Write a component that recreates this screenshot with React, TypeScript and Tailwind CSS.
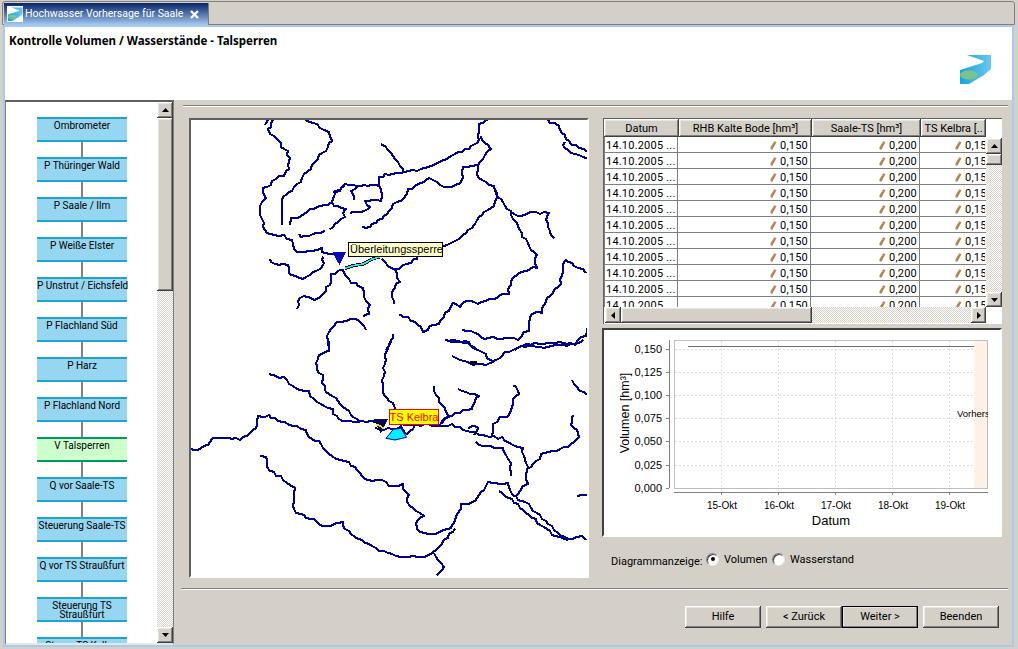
const bevel = "bg-[#d4d0c8] shadow-[inset_-1px_-1px_#404040,inset_1px_1px_#fff,inset_-2px_-2px_#808080,inset_2px_2px_#e8e6e0]";
const track = "bg-[repeating-conic-gradient(#d4d0c8_0_25%,#fff_0_50%)] bg-[length:2px_2px]";

const steps: { label: string; sel?: boolean; wrap?: boolean }[] = [
  { label: "Ombrometer" }, { label: "P Thüringer Wald" }, { label: "P Saale / Ilm" }, { label: "P Weiße Elster" },
  { label: "P Unstrut / Eichsfeld" }, { label: "P Flachland Süd" }, { label: "P Harz" }, { label: "P Flachland Nord" },
  { label: "V Talsperren", sel: true }, { label: "Q vor Saale-TS" }, { label: "Steuerung Saale-TS" }, { label: "Q vor TS Straußfurt" },
  { label: "Steuerung TS Straußfurt", wrap: true }, { label: "Steuer TS Kelbra" },
];

const topRivers = [
  "262,28 255,50 247,60 275,90 285,100 305,125 313,145 310,175 295,195 270,205 255,222 232,235 230,250 240,262 228,275 222,300 232,340 232,352 255,375 295,378 318,390 335,428 385,425 408,417 420,432 445,434 470,438",
  "243,45 248,30",
  "355,28 395,45 430,68 438,90 420,120 395,145 375,175 345,215 320,240 295,258 287,290 290,345",
  "318,345 320,328 350,320 375,300 440,280 478,298 478,318 458,335 435,358",
  "340,375 360,382 395,372 420,362",
  "445,250 480,225 585,228 585,205 600,195 660,188 720,178 770,155 820,130 880,100 885,45 910,28",
  "660,188 620,125 588,103",
  "885,80 915,115 890,145 875,165 878,205 925,230 935,260 925,285 880,320 860,350 820,385 775,410",
  "440,280 455,250 480,228",
  "510,270 500,245 520,228",
  "495,312 540,305 558,288 540,275 590,272 592,240 585,228",
  "530,355 545,358 600,320 625,285 660,265 670,240 730,208 790,235 830,215 835,175 875,165",
  "925,230 945,270 975,305 1020,390 1052,435 1055,470 1020,480 985,500 970,550 925,565 880,578 855,570 825,588 800,578 790,600 760,640 715,662 680,630 643,612",
  "975,305 1010,320 1040,308 1088,310 1085,340 1108,385",
  "1085,28 1120,50 1150,95 1205,125",
  "1135,95 1135,115 1170,135 1205,145",
  "253,447 258,460 305,465 318,498 355,510 385,490 415,470 415,440",
  "340,597 340,575 355,560 400,570 440,515 440,495 470,478",
  "470,478 490,510 530,535 550,585 550,610 535,622",
  "590,450 630,480 643,515 622,540 628,582",
  "630,480 665,465 690,450 700,445",
  "1205,485 1170,465 1140,450 1125,520 1080,575 1070,605 1035,615 1030,660 1000,685 900,685 870,665 832,660",
  "780,692 840,695 875,720",
  "1205,650 1200,675 1170,700 1065,700 1000,710 990,720",
  "545,657 510,625 470,632 435,655 425,690 432,720",
  "605,720 625,672",
];
const bottomRivers = [
  "425,0 432,30 400,45 392,80 410,105 420,160 450,175 490,215 525,245",
  "615,5 600,60 590,155 620,190 630,210 650,260",
  "250,105 295,115 345,153 370,155 385,180 440,210 460,238 530,245 570,245",
  "570,268 610,268 645,265 670,285 690,255",
  "650,255 730,255 800,255 870,280 950,295 1010,325 1025,380 1025,430 990,470 1030,495 1080,545 1150,600 1190,590 1205,600",
  "745,140 760,175 790,225 765,255",
  "818,150 880,165 860,205 800,225 770,250",
  "870,285 880,260 860,255 850,265",
  "873,310 950,325 975,370 978,408",
  "925,285 925,255 945,235 975,225 985,180 1005,160 985,135",
  "1030,390 1070,345 1160,315 1185,290 1160,255 1165,225",
  "1158,122 1175,145 1205,165",
  "1178,470 1205,465",
  "15,330 40,332 85,298 175,295 215,265 220,232 250,228 300,250 360,270 370,295 400,305 440,350 490,370 550,422 590,422 625,442 650,435 670,465 665,490 715,525 695,540 695,570 740,585 800,565 815,530 830,495 860,490 910,430 965,430 990,470",
  "225,350 240,350 245,385 285,410 325,445 325,510 345,525 385,540 415,560 470,548 490,575 560,620 620,645 720,655 745,640 810,565",
  "745,640 775,680 755,705",
  "940,455 980,480 1050,540 1110,590 1150,600",
  "785,3 850,10 900,45 925,65 960,40 1010,20 1100,20 1170,15 1195,0",
  "800,50 850,70 890,75 925,65",
];

// Gives a traced river the irregular, stair-stepped line of the original raster map.
function wiggle(points: string, seed: number): string {
  const pts = points.split(" ").map((p) => p.split(",").map(Number));
  const out: string[] = [];
  let k = seed * 7 + 1;
  for (let i = 0; i < pts.length - 1; i++) {
    const [x0, y0] = pts[i];
    const [x1, y1] = pts[i + 1];
    const len = Math.hypot(x1 - x0, y1 - y0) || 1;
    const n = Math.max(1, Math.round(len / 12));
    for (let j = 0; j < n; j++) {
      const t = j / n;
      k += 1;
      const noise = j === 0 ? 0 : Math.sin(k * 12.9898) * 43758.5453;
      const a = (noise - Math.floor(noise) - 0.5) * 7;
      const x = x0 + (x1 - x0) * t - ((y1 - y0) / len) * a;
      const y = y0 + (y1 - y0) * t + ((x1 - x0) / len) * a;
      out.push(`${Math.round(x / 3) * 3},${Math.round(y / 3) * 3}`);
    }
  }
  const last = pts[pts.length - 1];
  out.push(`${last[0]},${last[1]}`);
  return out.join(" ");
}

function Logo({ size }: { size: number }) {
  return (
    <svg width={size} height={size} viewBox="0 0 32 30">
      <defs>
        <linearGradient id="lg" x1="0" x2="1" y1="0" y2="0">
          <stop offset="0" stopColor="#14a4e0" />
          <stop offset="1" stopColor="#6cc6ee" />
        </linearGradient>
      </defs>
      <path d="M7 0 L31 0 L31 14 L24 20 L9 29 L0 29 L0 15 L22 8 L24 6 Z" fill="url(#lg)" />
      <ellipse cx="9" cy="20" rx="9" ry="4.5" fill="#7cc28c" />
    </svg>
  );
}

function Arrow({ d }: { d: "u" | "d" | "l" | "r" }) {
  const pts = { u: "0,4 7,4 3.5,0", d: "0,0 7,0 3.5,4", l: "4,0 4,7 0,3.5", r: "0,0 0,7 4,3.5" }[d];
  const s = d === "u" || d === "d" ? { w: 7, h: 4 } : { w: 4, h: 7 };
  return (
    <svg width={s.w} height={s.h} viewBox={`0 0 ${s.w} ${s.h}`}>
      <polygon points={pts} fill="#000" />
    </svg>
  );
}

function Pencil() {
  return (
    <svg width="7" height="9" viewBox="0 0 7 9" className="mr-[3px] shrink-0">
      <path d="M4.5 0.5 L6.5 1 L2.5 8.5 L0.5 8.5 L0.7 6.5 Z" fill="#b9804a" />
      <path d="M4.5 0.5 L0.7 6.5" fill="none" stroke="#9a9a80" strokeWidth="0.8" />
    </svg>
  );
}

function Cell({ w, v }: { w: string; v: string }) {
  return (
    <div className={`${w} shrink-0 h-full flex items-center justify-end pr-[2px] pt-[1px] border-r border-[#808080]`}>
      <Pencil />
      <span>{v}</span>
    </div>
  );
}

function Row() {
  return (
    <div className="flex h-[16px] shrink-0 border-b border-[#808080] leading-[15px] tracking-[0.2px]">
      <div className="w-[74px] shrink-0 h-full pl-[1px] pt-[1px] border-r border-l border-[#808080] flex items-center whitespace-nowrap overflow-hidden">14.10.2005 ...</div>
      <Cell w="w-[133px]" v="0,150" />
      <Cell w="w-[109px]" v="0,200" />
      <div className="w-[65px] shrink-0 h-full flex items-center pl-[35px] pt-[1px] overflow-hidden whitespace-nowrap">
        <Pencil />
        <span>0,150</span>
      </div>
    </div>
  );
}

function Radio({ on, label, className }: { on?: boolean; label: string; className: string }) {
  return (
    <div className={`flex items-center ${className}`}>
      <div className="w-[13px] h-[13px] rounded-full bg-white border border-t-[#808080] border-l-[#808080] border-r-[#e8e6e0] border-b-[#e8e6e0] shadow-[inset_1px_1px_#404040] flex items-center justify-center -mt-[6px]">
        {on && <div className="w-[4px] h-[4px] rounded-full bg-black" />}
      </div>
      <span className="ml-[5px] -mt-[4px] whitespace-nowrap">{label}</span>
    </div>
  );
}

function Btn({ label, strong }: { label: string; strong?: boolean }) {
  return (
    <div className={`${bevel} w-[76px] h-[22px] pt-[1px] flex items-center justify-center ${strong ? "outline outline-1 -outline-offset-1 outline-black" : ""}`}>
      {label}
    </div>
  );
}

export default function App() {
  const ticks = [["0,150", 349], ["0,125", 372], ["0,100", 395], ["0,075", 418], ["0,050", 441], ["0,025", 465], ["0,000", 488]] as const;
  const days = [["15-Okt", 721], ["16-Okt", 778], ["17-Okt", 835], ["18-Okt", 892], ["19-Okt", 949]] as const;
  return (
    <div className="w-[1018px] h-[649px] overflow-hidden bg-[#d4d0c8] flex flex-col text-[11px] text-black font-['Roboto',sans-serif]">
      {/* tab strip */}
      <div className="h-[25px] shrink-0 flex items-end pl-[2px] pr-[3px] pt-[1px]">
        <div className="flex-1 h-full border-t border-l border-r border-[#808080] rounded-t-[3px] flex border-b">
          <div className="w-[205px] ml-[1px] mt-[1px] h-[22px] bg-gradient-to-b from-[#0a246a] to-[#a6caf0] border-r border-[#808080] flex items-center pl-[3px] text-white">
            <div className="bg-white w-[16px] h-[16px] flex items-center justify-center shrink-0"><Logo size={15} /></div>
            <span className="ml-[2px] whitespace-nowrap text-[10.5px]">Hochwasser Vorhersage für Saale</span>
            <svg width="9" height="9" viewBox="0 0 9 9" className="ml-[7px] shrink-0"><path d="M1 1 L8 8 M8 1 L1 8" stroke="#fff" strokeWidth="2.4" /></svg>
          </div>
        </div>
      </div>

      {/* window body */}
      <div className="flex-1 min-h-0 ml-[3px] mr-[4px] mb-[2px] border-2 border-[#a6caf0] flex flex-col">
        <div className="h-[73px] shrink-0 bg-white flex justify-between pl-[4px] pr-[20px]">
          <div className="pt-[6px] font-bold text-[11.5px] leading-[16px] whitespace-nowrap font-['Noto_Sans',sans-serif]">Kontrolle Volumen / Wasserstände - Talsperren</div>
          <div className="pt-[27px]"><Logo size={32} /></div>
        </div>

        <div className="flex-1 min-h-0 flex">
          {/* step tree */}
          <div className="w-[169px] shrink-0 flex border-t-2 border-l border-r border-b-2 border-[#808080] border-t-[#606060] border-b-[#e8e6e0] bg-white overflow-hidden">
            <div className="flex-1 min-w-0 overflow-hidden pt-[15px] pl-[31px] flex flex-col">
              {steps.map((s, i) => (
                <div key={s.label} className="flex flex-col items-start shrink-0">
                  <div className={`w-[90px] h-[25px] border-y-2 text-center text-[10px] leading-[9px] pt-[2px] ${s.wrap ? "" : "whitespace-nowrap"} ${s.sel ? "bg-[#ccffcc] border-[#009966]" : "bg-[#97d6f0] border-[#1fa3d1]"}`}>{s.label}</div>
                  {i < steps.length - 1 && <div className="w-[2px] h-[15px] ml-[44px] bg-[#808080]" />}
                </div>
              ))}
            </div>
            <div className="w-[16px] shrink-0 flex flex-col">
              <div className={`${bevel} h-[16px] shrink-0 flex items-center justify-center`}><Arrow d="u" /></div>
              <div className={`${bevel} h-[173px] shrink-0`} />
              <div className={`flex-1 ${track}`} />
              <div className={`${bevel} h-[16px] shrink-0 flex items-center justify-center`}><Arrow d="d" /></div>
            </div>
          </div>

          {/* content */}
          <div className="flex-1 min-w-0 bg-[#d4d0c8] flex flex-col pt-[5px]">
            <div className="h-[2px] shrink-0 ml-[9px] mr-[4px] border-t border-b border-t-[#808080] border-b-white" />
            <div className="flex mt-[11px] ml-[15px]">
              {/* map */}
              <div className="relative w-[400px] h-[460px] shrink-0 bg-white border-2 border-t-[#606060] border-l-[#606060] border-r-white border-b-white overflow-hidden">
                <svg viewBox="191 120 396 456" className="w-full h-full block">
                  <g transform="translate(185 110) scale(0.3333)" fill="none" stroke="#00008b" strokeWidth="6.5" strokeLinejoin="round" shapeRendering="crispEdges">
                    {topRivers.map((p, i) => <polyline key={i} points={wiggle(p, i)} />)}
                    <polyline points="480,475 505,467 535,462 560,448 585,440" stroke="#000" strokeWidth="10" />
                    <polyline points="480,475 505,467 535,462 560,448 585,440" stroke="#19e6f0" strokeWidth="5" />
                    <polygon points="442,425 484,425 463,465" fill="#0a0ab0" stroke="none" />
                  </g>
                  <g transform="translate(185 340) scale(0.3333)" fill="none" stroke="#00008b" strokeWidth="6.5" strokeLinejoin="round" shapeRendering="crispEdges">
                    {bottomRivers.map((p, i) => <polyline key={i} points={wiggle(p, i + 40)} />)}
                    <polygon points="603,295 625,268 648,265 665,292 630,300" fill="#00f0ff" stroke="#00008b" strokeWidth="3" />
                    <polygon points="566,238 608,238 587,280" fill="#0a0a50" stroke="none" />
                    <line x1="575" y1="252" x2="597" y2="266" stroke="#ffe000" strokeWidth="5" />
                    <rect x="855" y="63" width="20" height="10" fill="#000" stroke="none" />
                  </g>
                </svg>
                <div className="absolute left-[157px] top-[122px] h-[15px] w-[95px] bg-[#ffffcc] border border-black flex items-center pl-[1px] text-[11px] font-['Liberation_Sans',sans-serif] whitespace-nowrap">Überleitungssperre</div>
                <div className="absolute left-[198px] top-[289px] h-[16px] w-[50px] bg-[#ffff00] border border-[#ff0000] flex items-center justify-center text-[11px] text-[#ee0000] font-['Liberation_Sans',sans-serif] whitespace-nowrap">TS Kelbra</div>
              </div>

              {/* right column */}
              <div className="w-[400px] shrink-0 ml-[13px] flex flex-col">
                <div className="ml-[1px] w-[399px] h-[206px] bg-white border-t border-l border-[#606060] overflow-hidden flex flex-col">
                  <div className="flex h-[188px] shrink-0">
                    <div className="w-[382px] shrink-0 flex flex-col overflow-hidden">
                      <div className="flex h-[18px] shrink-0 text-center leading-[19px] whitespace-nowrap">
                        <div className={`${bevel} w-[75px] shrink-0`}>Datum</div>
                        <div className={`${bevel} w-[133px] shrink-0`}>RHB Kalte Bode [hm³]</div>
                        <div className={`${bevel} w-[109px] shrink-0`}>Saale-TS [hm³]</div>
                        <div className={`${bevel} w-[65px] shrink-0 overflow-hidden`}>TS Kelbra [..</div>
                      </div>
                      {Array.from({ length: 11 }).map((_, i) => <Row key={i} />)}
                    </div>
                    <div className="w-[16px] shrink-0 flex flex-col">
                      <div className="h-[19px] shrink-0" />
                      <div className={`${bevel} h-[16px] shrink-0 flex items-center justify-center`}><Arrow d="u" /></div>
                      <div className={`${bevel} h-[11px] shrink-0`} />
                      <div className={`flex-1 ${track}`} />
                      <div className={`${bevel} h-[15px] shrink-0 flex items-center justify-center`}><Arrow d="d" /></div>
                    </div>
                  </div>
                  <div className="flex h-[16px] w-[381px] shrink-0 ml-[1px]">
                    <div className={`${bevel} w-[16px] shrink-0 flex items-center justify-center`}><Arrow d="l" /></div>
                    <div className={`${bevel} w-[191px] shrink-0`} />
                    <div className={`flex-1 ${track}`} />
                    <div className={`${bevel} w-[15px] shrink-0 flex items-center justify-center`}><Arrow d="r" /></div>
                  </div>
                </div>

                <div className="mt-[4px] h-[209px] bg-white border-2 border-t-[#404040] border-l-[#404040] border-r-white border-b-white">
                  <svg viewBox="604 330 396 205" className="w-full h-full block font-['Liberation_Sans',sans-serif]">
                    <rect x="974" y="340" width="14" height="148" fill="#fdf0e6" />
                    <rect x="674.5" y="340.5" width="313" height="148" fill="none" stroke="#c0c0c0" />
                    {ticks.slice(0, 6).map(([l, y]) => <line key={l} x1="675" x2="974" y1={y + 0.5} y2={y + 0.5} stroke="#dcdcdc" strokeDasharray="2 2" />)}
                    {days.map(([l, x]) => <line key={l} x1={x + 0.5} x2={x + 0.5} y1="341" y2="488" stroke="#dcdcdc" strokeDasharray="2 2" />)}
                    <line x1="688" x2="974" y1="346.5" y2="346.5" stroke="#707070" />
                    <line x1="669.5" x2="669.5" y1="340" y2="488" stroke="#808080" />
                    <line x1="674" x2="988" y1="492.5" y2="492.5" stroke="#808080" />
                    {ticks.map(([l, y]) => (
                      <g key={l}>
                        <line x1="666" x2="669" y1={y + 0.5} y2={y + 0.5} stroke="#808080" />
                        <text x="662" y={y + 4} textAnchor="end" fontSize="11" fill="#000">{l}</text>
                      </g>
                    ))}
                    {days.map(([l, x]) => (
                      <g key={l}>
                        <line x1={x + 0.5} x2={x + 0.5} y1="492" y2="495" stroke="#808080" />
                        <text x={x + 1} y="509" textAnchor="middle" fontSize="10" fill="#000">{l}</text>
                      </g>
                    ))}
                    <text x="831" y="525" textAnchor="middle" fontSize="13" fill="#000">Datum</text>
                    <text transform="translate(629 413) rotate(-90)" textAnchor="middle" fontSize="12.5" fill="#000">Volumen [hm³]</text>
                    <svg x="950" y="400" width="38" height="24" viewBox="950 400 38 24">
                      <text x="957" y="417" fontSize="9.5" fill="#000">Vorhersage</text>
                    </svg>
                  </svg>
                </div>

                <div className="mt-[15px] h-[20px] flex items-center pl-[9px]">
                  <span className="w-[95px] shrink-0 whitespace-nowrap">Diagrammanzeige:</span>
                  <Radio on label="Volumen" className="w-[66px] shrink-0" />
                  <Radio label="Wasserstand" className="" />
                </div>
              </div>
            </div>

            <div className="h-[2px] shrink-0 ml-[7px] mr-[4px] mt-[10px] border-t border-b border-t-[#808080] border-b-white" />
            <div className="flex justify-end pr-[13px] mt-[16px]">
              <Btn label="Hilfe" />
              <div className="w-[5px]" />
              <Btn label="< Zurück" />
              <Btn label="Weiter >" strong />
              <div className="w-[5px]" />
              <Btn label="Beenden" />
            </div>
          </div>
        </div>
      </div>
    </div>
  );
}
